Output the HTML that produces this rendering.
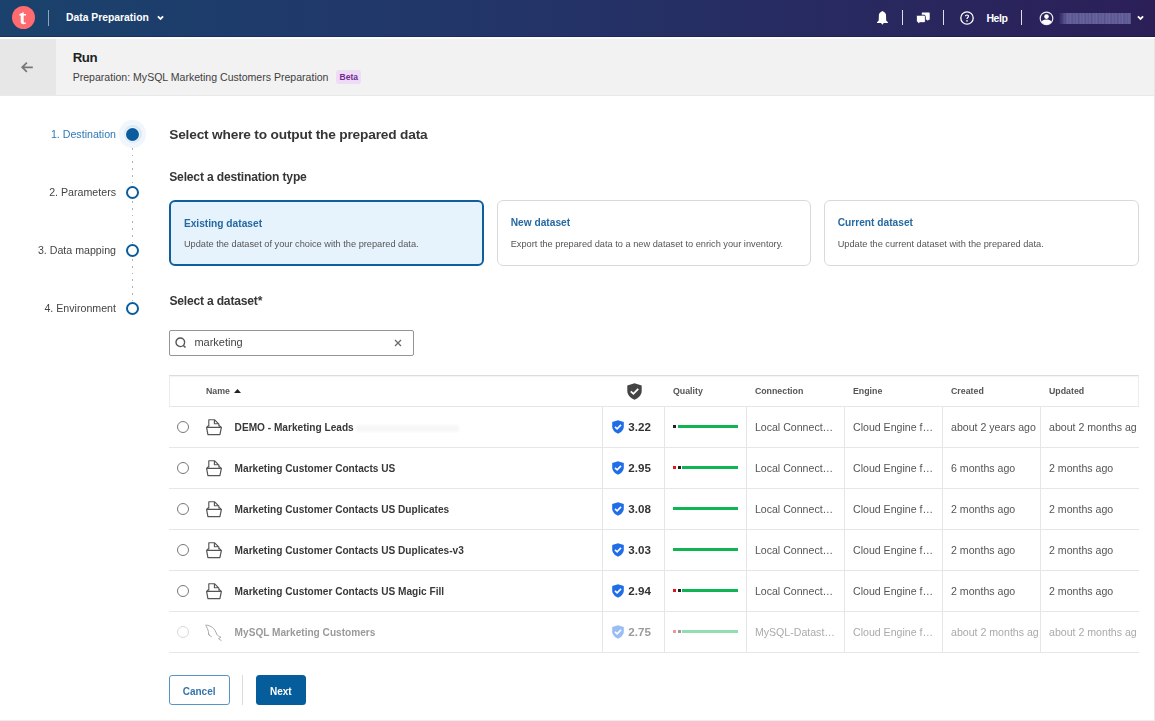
<!DOCTYPE html><html><head><meta charset="utf-8"><style>
html,body{margin:0;padding:0;}
body{width:1155px;height:721px;overflow:hidden;position:relative;background:#fff;filter:blur(0.3px);font-family:"Liberation Sans",sans-serif;}
.t{position:absolute;white-space:nowrap;}
.b{position:absolute;box-sizing:border-box;}
svg{position:absolute;overflow:visible;}
</style></head><body>
<div class="b" style="left:0px;top:0px;width:1155px;height:37px;background:linear-gradient(90deg,#1a426d 0%,#233468 45%,#2c1f58 100%);"></div>
<div class="b" style="left:0px;top:36px;width:1155px;height:1px;background:rgba(10,10,50,0.25);"></div>
<div class="b" style="left:0px;top:37px;width:1155px;height:2px;background:#fbfbfb;"></div>
<div class="b" style="left:11.8px;top:6.2px;width:23px;height:23px;border-radius:50%;background:#ff6b6e;"></div>
<svg style="left:0;top:0" width="40" height="37" viewBox="0 0 40 37"><path d="M20.7 13.6 L23.7 11.9 L23.7 14 L26 14 L26 15.6 L23.7 15.6 L23.7 21.6 Q23.7 22.7 24.8 22.7 L26 22.5 L26 23.6 Q25 24.2 23.5 24.2 Q20.7 24.2 20.7 21.5 L20.7 15.6 L19.3 15.6 L19.3 14.6 Z" fill="#fff"/></svg>
<div class="b" style="left:47.5px;top:10px;width:1px;height:15.5px;background:#8fa2bb;"></div>
<div class="t " style="left:66px;top:12.54px;font-size:10.35px;line-height:10.35px;color:#fff;font-weight:700;">Data Preparation</div>
<svg style="left:157px;top:15px" width="7" height="6" viewBox="0 0 7 6"><path d="M0.9 1.3 L3.5 3.9 L6.1 1.3" fill="none" stroke="#fff" stroke-width="1.8"/></svg>
<svg style="left:872px;top:8px" width="22" height="20" viewBox="0 0 22 20"><path d="M10.4 3 C8.9 4 7.1 4.6 6.9 6.8 L6.7 12.6 L5 14.2 L5 14.9 L15.9 14.9 L15.9 14.2 L14.2 12.6 L14 6.8 C13.8 4.6 12 4 10.4 3 Z M9 15.1 L10.4 16.8 L11.8 15.1 Z" fill="#fff"/></svg>
<div class="b" style="left:902px;top:10px;width:1px;height:15px;background:#fff;opacity:.85;"></div>
<svg style="left:915.5px;top:11.5px" width="15" height="13" viewBox="0 0 15 13"><path d="M6.4 0.4 H13.1 Q13.7 0.4 13.7 1 V7.2 Q13.7 7.8 13.1 7.8 H12.5 L11.9 9 L11.1 7.8 H6.4 Q5.8 7.8 5.8 7.2 V1 Q5.8 0.4 6.4 0.4 Z" fill="#fff"/><path d="M1.8 3.2 H8 Q9.4 3.2 9.4 4.6 V9.3 Q9.4 10.7 8 10.7 H3.6 L2.4 11.9 L2 10.6 Q0.4 10.3 0.4 8.8 V4.6 Q0.4 3.2 1.8 3.2 Z" fill="#fff" stroke="#27255e" stroke-width="0.9"/></svg>
<div class="b" style="left:942.5px;top:10px;width:1px;height:15px;background:#fff;opacity:.85;"></div>
<svg style="left:959.5px;top:11px" width="14" height="14" viewBox="0 0 14 14"><circle cx="7" cy="7" r="6.2" fill="none" stroke="#fff" stroke-width="1.3"/><path d="M4.9 5.3 C4.9 4.1 5.8 3.4 7 3.4 C8.2 3.4 9.1 4.1 9.1 5.2 C9.1 6.5 7.6 6.7 7.6 8.1 L6.4 8.1 C6.4 6.3 7.9 6.1 7.9 5.2 C7.9 4.7 7.5 4.4 7 4.4 C6.4 4.4 6.1 4.8 6.1 5.3 Z" fill="#fff"/><circle cx="7" cy="9.9" r="0.8" fill="#fff"/></svg>
<div class="t " style="left:986.4px;top:13.11px;font-size:10.5px;line-height:10.5px;color:#fff;font-weight:700;letter-spacing:-0.4px;">Help</div>
<div class="b" style="left:1021px;top:10px;width:1px;height:15px;background:#fff;opacity:.85;"></div>
<svg style="left:1038.5px;top:10.5px" width="15" height="15" viewBox="0 0 15 15"><defs><clipPath id="uc"><circle cx="7.5" cy="7.4" r="6.2"/></clipPath></defs><circle cx="7.5" cy="7.4" r="6.3" fill="none" stroke="#fff" stroke-width="1.2" opacity="0.92"/><g clip-path="url(#uc)"><circle cx="7.5" cy="5.6" r="2.3" fill="#fff"/><ellipse cx="7.5" cy="13.1" rx="6" ry="4.6" fill="#fff"/></g></svg>
<div class="b" style="left:1058.5px;top:12.5px;width:72px;height:11.2px;background:linear-gradient(90deg,#2c2460 0%,rgba(44,36,96,0.5) 5%,rgba(44,36,96,0) 10%),repeating-linear-gradient(90deg,#57538d 0px,#67629a 2px,#5c5892 3.5px,#6a659c 5px,#57538d 6.5px);filter:blur(0.6px);"></div>
<svg style="left:1137px;top:15px" width="7" height="6" viewBox="0 0 7 6"><path d="M0.9 1.3 L3.5 3.9 L6.1 1.3" fill="none" stroke="#fff" stroke-width="1.8"/></svg>
<div class="b" style="left:0px;top:39px;width:1155px;height:57px;background:#f2f2f2;border-bottom:1px solid #e9e9e9;"></div>
<div class="b" style="left:0px;top:39px;width:56px;height:56px;background:#e7e7e7;"></div>
<svg style="left:21px;top:62.3px" width="12" height="11" viewBox="0 0 12 11"><path d="M11.8 5.3 H1.3 M5.9 0.7 L1.2 5.3 L5.9 9.9" fill="none" stroke="#777" stroke-width="1.7"/></svg>
<div class="t " style="left:72.7px;top:50.94px;font-size:13.3px;line-height:13.3px;color:#1f1f1f;font-weight:700;letter-spacing:-0.427px;">Run</div>
<div class="t " style="left:72.7px;top:71.67px;font-size:10.55px;line-height:10.55px;color:#404040;font-weight:400;">Preparation: MySQL Marketing Customers Preparation</div>
<div class="b" style="left:336px;top:70.4px;width:25px;height:13.5px;background:#eedcf6;border-radius:3px;"></div>
<div class="t " style="left:339.6px;top:73.10px;font-size:8.5px;line-height:8.5px;color:#6f2c91;font-weight:700;">Beta</div>
<div class="b" style="left:1154px;top:38px;width:1px;height:683px;background:#e6e6e6;"></div>
<div class="b" style="left:0px;top:720px;width:1155px;height:1px;background:#ececec;"></div>
<div class="t " style="right:1039px;top:128.53px;font-size:10.65px;line-height:10.65px;color:#2d79b3;font-weight:400;text-align:right;">1. Destination</div>
<div class="b" style="left:118.75px;top:120.4px;width:27.5px;height:27.5px;border-radius:50%;background:#f0f6fb;"></div>
<div class="b" style="left:123.5px;top:125.15px;width:18px;height:18px;border-radius:50%;background:#d8e9f6;"></div>
<div class="b" style="left:124.9px;top:126.55000000000001px;width:15.2px;height:15.2px;border-radius:50%;background:#eef5fb;"></div>
<div class="b" style="left:125.95px;top:127.60000000000001px;width:13.1px;height:13.1px;border-radius:50%;background:#0b5c9c;"></div>
<div class="t " style="right:1039px;top:186.78px;font-size:10.65px;line-height:10.65px;color:#444;font-weight:400;text-align:right;">2. Parameters</div>
<div class="b" style="left:126.0px;top:185.5px;width:13px;height:13px;border-radius:50%;border:2px solid #0b5c9c;background:#fff;"></div>
<div class="t " style="right:1039px;top:244.78px;font-size:10.65px;line-height:10.65px;color:#444;font-weight:400;text-align:right;">3. Data mapping</div>
<div class="b" style="left:126.0px;top:243.5px;width:13px;height:13px;border-radius:50%;border:2px solid #0b5c9c;background:#fff;"></div>
<div class="t " style="right:1039px;top:302.78px;font-size:10.65px;line-height:10.65px;color:#444;font-weight:400;text-align:right;">4. Environment</div>
<div class="b" style="left:126.0px;top:301.5px;width:13px;height:13px;border-radius:50%;border:2px solid #0b5c9c;background:#fff;"></div>
<div class="b" style="left:132px;top:147.85px;width:1.2px;height:1.8px;background:#b0b0b0;"></div>
<div class="b" style="left:132px;top:154.6px;width:1.2px;height:1.8px;background:#b0b0b0;"></div>
<div class="b" style="left:132px;top:161.35px;width:1.2px;height:1.8px;background:#b0b0b0;"></div>
<div class="b" style="left:132px;top:168.1px;width:1.2px;height:1.8px;background:#b0b0b0;"></div>
<div class="b" style="left:132px;top:174.85px;width:1.2px;height:1.8px;background:#b0b0b0;"></div>
<div class="b" style="left:132px;top:181.6px;width:1.2px;height:1.8px;background:#b0b0b0;"></div>
<div class="b" style="left:132px;top:201.0px;width:1.2px;height:1.8px;background:#b0b0b0;"></div>
<div class="b" style="left:132px;top:207.75px;width:1.2px;height:1.8px;background:#b0b0b0;"></div>
<div class="b" style="left:132px;top:214.5px;width:1.2px;height:1.8px;background:#b0b0b0;"></div>
<div class="b" style="left:132px;top:221.25px;width:1.2px;height:1.8px;background:#b0b0b0;"></div>
<div class="b" style="left:132px;top:228.0px;width:1.2px;height:1.8px;background:#b0b0b0;"></div>
<div class="b" style="left:132px;top:234.75px;width:1.2px;height:1.8px;background:#b0b0b0;"></div>
<div class="b" style="left:132px;top:241.5px;width:1.2px;height:1.8px;background:#b0b0b0;"></div>
<div class="b" style="left:132px;top:259.0px;width:1.2px;height:1.8px;background:#b0b0b0;"></div>
<div class="b" style="left:132px;top:265.75px;width:1.2px;height:1.8px;background:#b0b0b0;"></div>
<div class="b" style="left:132px;top:272.5px;width:1.2px;height:1.8px;background:#b0b0b0;"></div>
<div class="b" style="left:132px;top:279.25px;width:1.2px;height:1.8px;background:#b0b0b0;"></div>
<div class="b" style="left:132px;top:286.0px;width:1.2px;height:1.8px;background:#b0b0b0;"></div>
<div class="b" style="left:132px;top:292.75px;width:1.2px;height:1.8px;background:#b0b0b0;"></div>
<div class="b" style="left:132px;top:299.5px;width:1.2px;height:1.8px;background:#b0b0b0;"></div>
<div class="t " style="left:169.2px;top:128.20px;font-size:13.7px;line-height:13.7px;color:#363636;font-weight:700;letter-spacing:-0.179px;">Select where to output the prepared data</div>
<div class="t " style="left:169.2px;top:171.36px;font-size:12.1px;line-height:12.1px;color:#363636;font-weight:700;letter-spacing:-0.174px;">Select a destination type</div>
<div class="b" style="left:169px;top:200.3px;width:315px;height:65.7px;border:2px solid #0f5f9e;border-radius:6px;background:#e6f3fc;"></div>
<div class="t " style="left:183.9px;top:218.87px;font-size:10.2px;line-height:10.2px;color:#2569a3;font-weight:700;">Existing dataset</div>
<div class="t " style="left:183.9px;top:239.80px;font-size:9.22px;line-height:9.22px;color:#555;font-weight:400;">Update the dataset of your choice with the prepared data.</div>
<div class="b" style="left:497px;top:200.4px;width:314px;height:65.6px;border:1px solid #d9d9d9;border-radius:6px;background:#fff;"></div>
<div class="t " style="left:510.7px;top:218.27px;font-size:10.2px;line-height:10.2px;color:#2569a3;font-weight:700;">New dataset</div>
<div class="t " style="left:510.7px;top:239.50px;font-size:9.22px;line-height:9.22px;color:#555;font-weight:400;">Export the prepared data to a new dataset to enrich your inventory.</div>
<div class="b" style="left:824px;top:200.4px;width:315px;height:65.6px;border:1px solid #d9d9d9;border-radius:6px;background:#fff;"></div>
<div class="t " style="left:837.7px;top:218.27px;font-size:10.2px;line-height:10.2px;color:#2569a3;font-weight:700;">Current dataset</div>
<div class="t " style="left:837.7px;top:239.50px;font-size:9.22px;line-height:9.22px;color:#555;font-weight:400;">Update the current dataset with the prepared data.</div>
<div class="t " style="left:169.4px;top:295.06px;font-size:12.1px;line-height:12.1px;color:#363636;font-weight:700;letter-spacing:-0.199px;">Select a dataset*</div>
<div class="b" style="left:169px;top:330px;width:245px;height:25.5px;border:1px solid #959595;border-radius:2px;background:#fff;"></div>
<svg style="left:175px;top:337px" width="12" height="12" viewBox="0 0 12 12"><circle cx="5.3" cy="5.3" r="4.3" fill="none" stroke="#555" stroke-width="1.4"/><path d="M8.4 8.4 L10.5 10.5" stroke="#555" stroke-width="1.4"/></svg>
<div class="t " style="left:194.4px;top:337.39px;font-size:11px;line-height:11px;color:#444;font-weight:400;">marketing</div>
<svg style="left:393.5px;top:338.5px" width="8" height="8" viewBox="0 0 8 8"><path d="M1 1 L7 7 M7 1 L1 7" stroke="#666" stroke-width="1.2"/></svg>
<div class="b" style="left:169px;top:374.7px;width:970px;height:32.2px;border:1px solid #ececec;border-top:1px solid #dcdcdc;border-bottom:1px solid #e6e6e6;box-shadow:inset 0 1px 1px #f4f4f4;background:#fff;"></div>
<div class="t " style="left:206px;top:386.65px;font-size:8.8px;line-height:8.8px;color:#555;font-weight:700;">Name</div>
<svg style="left:234px;top:389px" width="7" height="4" viewBox="0 0 7 4"><path d="M0 4 L3.5 0 L7 4 Z" fill="#222"/></svg>
<svg style="left:627px;top:383px" width="15" height="17" viewBox="0 0 15 17"><path d="M7.5 0.3 L14.7 2.6 L14.7 8 C14.7 12 11.6 15 7.5 16.7 C3.4 15 0.3 12 0.3 8 L0.3 2.6 Z" fill="#444"/><path d="M3.8 8.3 L6.4 10.8 L11.2 5.8" fill="none" stroke="#fff" stroke-width="1.8"/></svg>
<div class="t " style="left:673px;top:386.55px;font-size:8.8px;line-height:8.8px;color:#555;font-weight:700;">Quality</div>
<div class="t " style="left:754.9px;top:386.55px;font-size:8.8px;line-height:8.8px;color:#555;font-weight:700;">Connection</div>
<div class="t " style="left:853px;top:386.55px;font-size:8.8px;line-height:8.8px;color:#555;font-weight:700;">Engine</div>
<div class="t " style="left:951px;top:386.55px;font-size:8.8px;line-height:8.8px;color:#555;font-weight:700;">Created</div>
<div class="t " style="left:1049px;top:386.55px;font-size:8.8px;line-height:8.8px;color:#555;font-weight:700;">Updated</div>
<div class="b" style="left:169px;top:446.6px;width:970px;height:1px;background:#e6e6e6;"></div>
<div class="b" style="left:602.3px;top:406px;width:1px;height:41px;background:#e6e6e6;"></div>
<div class="b" style="left:664px;top:406px;width:1px;height:41px;background:#e6e6e6;"></div>
<div class="b" style="left:746px;top:406px;width:1px;height:41px;background:#e6e6e6;"></div>
<div class="b" style="left:844px;top:406px;width:1px;height:41px;background:#e6e6e6;"></div>
<div class="b" style="left:942px;top:406px;width:1px;height:41px;background:#e6e6e6;"></div>
<div class="b" style="left:1040px;top:406px;width:1px;height:41px;background:#e6e6e6;"></div>
<div class="b" style="left:176.8px;top:420.5px;width:12px;height:12px;border-radius:50%;border:1px solid #777;background:#fff;"></div>
<svg style="left:206px;top:419.2px" width="16" height="17" viewBox="0 0 16 17"><path d="M2.8 7.6 V0.7 H8.4 L12.9 5.1 V7.6 M8.4 0.7 V4.7 H12.9" fill="none" stroke="#555" stroke-width="1.15" stroke-linejoin="round"/><path d="M2.7 6.4 L0.6 8.4 H15.4 L13.1 6.4 M0.6 8.4 L1.9 15.6 H13.9 L15.4 8.4" fill="none" stroke="#555" stroke-width="1.2" stroke-linejoin="round"/></svg>
<div class="t " style="left:234.6px;top:422.83px;font-size:10.12px;line-height:10.12px;color:#383838;font-weight:700;">DEMO - Marketing Leads</div>
<div class="b" style="left:356px;top:424.5px;width:103px;height:7.5px;background:#f7f7f7;filter:blur(1px);border-radius:2px;"></div>
<svg style="left:612px;top:420.0px;" width="12" height="14" viewBox="0 0 12 14"><path d="M6 0.2 L11.8 2.1 L11.8 6.6 C11.8 9.9 9.3 12.4 6 13.8 C2.7 12.4 0.2 9.9 0.2 6.6 L0.2 2.1 Z" fill="#1f6ee8"/><path d="M3 6.9 L5.1 8.9 L9 4.9" fill="none" stroke="#fff" stroke-width="1.6"/></svg>
<div class="t " style="left:628.3px;top:421.48px;font-size:11.6px;line-height:11.6px;color:#333;font-weight:700;">3.22</div>
<div class="b" style="left:673px;top:425.0px;width:3px;height:3px;background:#222;"></div>
<div class="b" style="left:677.5px;top:425.0px;width:60.10000000000002px;height:3.4px;background:#0fb552;border-radius:0;"></div>
<div class="t " style="left:754.9px;top:422.33px;font-size:10.6px;line-height:10.6px;color:#555;font-weight:400;">Local Connect…</div>
<div class="t " style="left:853px;top:422.33px;font-size:10.6px;line-height:10.6px;color:#555;font-weight:400;">Cloud Engine f…</div>
<div class="t " style="left:951px;top:422.33px;font-size:10.6px;line-height:10.6px;color:#555;font-weight:400;width:90px;overflow:hidden;">about 2 years ago</div>
<div class="t " style="left:1049px;top:422.33px;font-size:10.6px;line-height:10.6px;color:#555;font-weight:400;width:90px;overflow:hidden;">about 2 months ag</div>
<div class="b" style="left:169px;top:487.6px;width:970px;height:1px;background:#e6e6e6;"></div>
<div class="b" style="left:602.3px;top:447px;width:1px;height:41px;background:#e6e6e6;"></div>
<div class="b" style="left:664px;top:447px;width:1px;height:41px;background:#e6e6e6;"></div>
<div class="b" style="left:746px;top:447px;width:1px;height:41px;background:#e6e6e6;"></div>
<div class="b" style="left:844px;top:447px;width:1px;height:41px;background:#e6e6e6;"></div>
<div class="b" style="left:942px;top:447px;width:1px;height:41px;background:#e6e6e6;"></div>
<div class="b" style="left:1040px;top:447px;width:1px;height:41px;background:#e6e6e6;"></div>
<div class="b" style="left:176.8px;top:461.5px;width:12px;height:12px;border-radius:50%;border:1px solid #777;background:#fff;"></div>
<svg style="left:206px;top:460.2px" width="16" height="17" viewBox="0 0 16 17"><path d="M2.8 7.6 V0.7 H8.4 L12.9 5.1 V7.6 M8.4 0.7 V4.7 H12.9" fill="none" stroke="#555" stroke-width="1.15" stroke-linejoin="round"/><path d="M2.7 6.4 L0.6 8.4 H15.4 L13.1 6.4 M0.6 8.4 L1.9 15.6 H13.9 L15.4 8.4" fill="none" stroke="#555" stroke-width="1.2" stroke-linejoin="round"/></svg>
<div class="t " style="left:234.6px;top:463.83px;font-size:10.12px;line-height:10.12px;color:#383838;font-weight:700;">Marketing Customer Contacts US</div>
<svg style="left:612px;top:461.0px;" width="12" height="14" viewBox="0 0 12 14"><path d="M6 0.2 L11.8 2.1 L11.8 6.6 C11.8 9.9 9.3 12.4 6 13.8 C2.7 12.4 0.2 9.9 0.2 6.6 L0.2 2.1 Z" fill="#1f6ee8"/><path d="M3 6.9 L5.1 8.9 L9 4.9" fill="none" stroke="#fff" stroke-width="1.6"/></svg>
<div class="t " style="left:628.3px;top:462.48px;font-size:11.6px;line-height:11.6px;color:#333;font-weight:700;">2.95</div>
<div class="b" style="left:673px;top:466.0px;width:3px;height:3px;background:#e0161b;"></div>
<div class="b" style="left:677.5px;top:466.0px;width:3px;height:3px;background:#222;"></div>
<div class="b" style="left:682.0px;top:466.0px;width:55.60000000000002px;height:3.4px;background:#0fb552;border-radius:0;"></div>
<div class="t " style="left:754.9px;top:463.33px;font-size:10.6px;line-height:10.6px;color:#555;font-weight:400;">Local Connect…</div>
<div class="t " style="left:853px;top:463.33px;font-size:10.6px;line-height:10.6px;color:#555;font-weight:400;">Cloud Engine f…</div>
<div class="t " style="left:951px;top:463.33px;font-size:10.6px;line-height:10.6px;color:#555;font-weight:400;width:90px;overflow:hidden;">6 months ago</div>
<div class="t " style="left:1049px;top:463.33px;font-size:10.6px;line-height:10.6px;color:#555;font-weight:400;width:90px;overflow:hidden;">2 months ago</div>
<div class="b" style="left:169px;top:528.6px;width:970px;height:1px;background:#e6e6e6;"></div>
<div class="b" style="left:602.3px;top:488px;width:1px;height:41px;background:#e6e6e6;"></div>
<div class="b" style="left:664px;top:488px;width:1px;height:41px;background:#e6e6e6;"></div>
<div class="b" style="left:746px;top:488px;width:1px;height:41px;background:#e6e6e6;"></div>
<div class="b" style="left:844px;top:488px;width:1px;height:41px;background:#e6e6e6;"></div>
<div class="b" style="left:942px;top:488px;width:1px;height:41px;background:#e6e6e6;"></div>
<div class="b" style="left:1040px;top:488px;width:1px;height:41px;background:#e6e6e6;"></div>
<div class="b" style="left:176.8px;top:502.5px;width:12px;height:12px;border-radius:50%;border:1px solid #777;background:#fff;"></div>
<svg style="left:206px;top:501.2px" width="16" height="17" viewBox="0 0 16 17"><path d="M2.8 7.6 V0.7 H8.4 L12.9 5.1 V7.6 M8.4 0.7 V4.7 H12.9" fill="none" stroke="#555" stroke-width="1.15" stroke-linejoin="round"/><path d="M2.7 6.4 L0.6 8.4 H15.4 L13.1 6.4 M0.6 8.4 L1.9 15.6 H13.9 L15.4 8.4" fill="none" stroke="#555" stroke-width="1.2" stroke-linejoin="round"/></svg>
<div class="t " style="left:234.6px;top:504.83px;font-size:10.12px;line-height:10.12px;color:#383838;font-weight:700;">Marketing Customer Contacts US Duplicates</div>
<svg style="left:612px;top:502.0px;" width="12" height="14" viewBox="0 0 12 14"><path d="M6 0.2 L11.8 2.1 L11.8 6.6 C11.8 9.9 9.3 12.4 6 13.8 C2.7 12.4 0.2 9.9 0.2 6.6 L0.2 2.1 Z" fill="#1f6ee8"/><path d="M3 6.9 L5.1 8.9 L9 4.9" fill="none" stroke="#fff" stroke-width="1.6"/></svg>
<div class="t " style="left:628.3px;top:503.48px;font-size:11.6px;line-height:11.6px;color:#333;font-weight:700;">3.08</div>
<div class="b" style="left:673px;top:507.0px;width:64.60000000000002px;height:3.4px;background:#0fb552;border-radius:0;"></div>
<div class="t " style="left:754.9px;top:504.33px;font-size:10.6px;line-height:10.6px;color:#555;font-weight:400;">Local Connect…</div>
<div class="t " style="left:853px;top:504.33px;font-size:10.6px;line-height:10.6px;color:#555;font-weight:400;">Cloud Engine f…</div>
<div class="t " style="left:951px;top:504.33px;font-size:10.6px;line-height:10.6px;color:#555;font-weight:400;width:90px;overflow:hidden;">2 months ago</div>
<div class="t " style="left:1049px;top:504.33px;font-size:10.6px;line-height:10.6px;color:#555;font-weight:400;width:90px;overflow:hidden;">2 months ago</div>
<div class="b" style="left:169px;top:569.6px;width:970px;height:1px;background:#e6e6e6;"></div>
<div class="b" style="left:602.3px;top:529px;width:1px;height:41px;background:#e6e6e6;"></div>
<div class="b" style="left:664px;top:529px;width:1px;height:41px;background:#e6e6e6;"></div>
<div class="b" style="left:746px;top:529px;width:1px;height:41px;background:#e6e6e6;"></div>
<div class="b" style="left:844px;top:529px;width:1px;height:41px;background:#e6e6e6;"></div>
<div class="b" style="left:942px;top:529px;width:1px;height:41px;background:#e6e6e6;"></div>
<div class="b" style="left:1040px;top:529px;width:1px;height:41px;background:#e6e6e6;"></div>
<div class="b" style="left:176.8px;top:543.5px;width:12px;height:12px;border-radius:50%;border:1px solid #777;background:#fff;"></div>
<svg style="left:206px;top:542.2px" width="16" height="17" viewBox="0 0 16 17"><path d="M2.8 7.6 V0.7 H8.4 L12.9 5.1 V7.6 M8.4 0.7 V4.7 H12.9" fill="none" stroke="#555" stroke-width="1.15" stroke-linejoin="round"/><path d="M2.7 6.4 L0.6 8.4 H15.4 L13.1 6.4 M0.6 8.4 L1.9 15.6 H13.9 L15.4 8.4" fill="none" stroke="#555" stroke-width="1.2" stroke-linejoin="round"/></svg>
<div class="t " style="left:234.6px;top:545.83px;font-size:10.12px;line-height:10.12px;color:#383838;font-weight:700;">Marketing Customer Contacts US Duplicates-v3</div>
<svg style="left:612px;top:543.0px;" width="12" height="14" viewBox="0 0 12 14"><path d="M6 0.2 L11.8 2.1 L11.8 6.6 C11.8 9.9 9.3 12.4 6 13.8 C2.7 12.4 0.2 9.9 0.2 6.6 L0.2 2.1 Z" fill="#1f6ee8"/><path d="M3 6.9 L5.1 8.9 L9 4.9" fill="none" stroke="#fff" stroke-width="1.6"/></svg>
<div class="t " style="left:628.3px;top:544.48px;font-size:11.6px;line-height:11.6px;color:#333;font-weight:700;">3.03</div>
<div class="b" style="left:673px;top:548.0px;width:64.60000000000002px;height:3.4px;background:#0fb552;border-radius:0;"></div>
<div class="t " style="left:754.9px;top:545.33px;font-size:10.6px;line-height:10.6px;color:#555;font-weight:400;">Local Connect…</div>
<div class="t " style="left:853px;top:545.33px;font-size:10.6px;line-height:10.6px;color:#555;font-weight:400;">Cloud Engine f…</div>
<div class="t " style="left:951px;top:545.33px;font-size:10.6px;line-height:10.6px;color:#555;font-weight:400;width:90px;overflow:hidden;">2 months ago</div>
<div class="t " style="left:1049px;top:545.33px;font-size:10.6px;line-height:10.6px;color:#555;font-weight:400;width:90px;overflow:hidden;">2 months ago</div>
<div class="b" style="left:169px;top:610.6px;width:970px;height:1px;background:#e6e6e6;"></div>
<div class="b" style="left:602.3px;top:570px;width:1px;height:41px;background:#e6e6e6;"></div>
<div class="b" style="left:664px;top:570px;width:1px;height:41px;background:#e6e6e6;"></div>
<div class="b" style="left:746px;top:570px;width:1px;height:41px;background:#e6e6e6;"></div>
<div class="b" style="left:844px;top:570px;width:1px;height:41px;background:#e6e6e6;"></div>
<div class="b" style="left:942px;top:570px;width:1px;height:41px;background:#e6e6e6;"></div>
<div class="b" style="left:1040px;top:570px;width:1px;height:41px;background:#e6e6e6;"></div>
<div class="b" style="left:176.8px;top:584.5px;width:12px;height:12px;border-radius:50%;border:1px solid #777;background:#fff;"></div>
<svg style="left:206px;top:583.2px" width="16" height="17" viewBox="0 0 16 17"><path d="M2.8 7.6 V0.7 H8.4 L12.9 5.1 V7.6 M8.4 0.7 V4.7 H12.9" fill="none" stroke="#555" stroke-width="1.15" stroke-linejoin="round"/><path d="M2.7 6.4 L0.6 8.4 H15.4 L13.1 6.4 M0.6 8.4 L1.9 15.6 H13.9 L15.4 8.4" fill="none" stroke="#555" stroke-width="1.2" stroke-linejoin="round"/></svg>
<div class="t " style="left:234.6px;top:586.83px;font-size:10.12px;line-height:10.12px;color:#383838;font-weight:700;">Marketing Customer Contacts US Magic Fill</div>
<svg style="left:612px;top:584.0px;" width="12" height="14" viewBox="0 0 12 14"><path d="M6 0.2 L11.8 2.1 L11.8 6.6 C11.8 9.9 9.3 12.4 6 13.8 C2.7 12.4 0.2 9.9 0.2 6.6 L0.2 2.1 Z" fill="#1f6ee8"/><path d="M3 6.9 L5.1 8.9 L9 4.9" fill="none" stroke="#fff" stroke-width="1.6"/></svg>
<div class="t " style="left:628.3px;top:585.48px;font-size:11.6px;line-height:11.6px;color:#333;font-weight:700;">2.94</div>
<div class="b" style="left:673px;top:589.0px;width:3px;height:3px;background:#e0161b;"></div>
<div class="b" style="left:677.5px;top:589.0px;width:3px;height:3px;background:#222;"></div>
<div class="b" style="left:682.0px;top:589.0px;width:55.60000000000002px;height:3.4px;background:#0fb552;border-radius:0;"></div>
<div class="t " style="left:754.9px;top:586.33px;font-size:10.6px;line-height:10.6px;color:#555;font-weight:400;">Local Connect…</div>
<div class="t " style="left:853px;top:586.33px;font-size:10.6px;line-height:10.6px;color:#555;font-weight:400;">Cloud Engine f…</div>
<div class="t " style="left:951px;top:586.33px;font-size:10.6px;line-height:10.6px;color:#555;font-weight:400;width:90px;overflow:hidden;">2 months ago</div>
<div class="t " style="left:1049px;top:586.33px;font-size:10.6px;line-height:10.6px;color:#555;font-weight:400;width:90px;overflow:hidden;">2 months ago</div>
<div class="b" style="left:169px;top:651.6px;width:970px;height:1px;background:#e6e6e6;"></div>
<div class="b" style="left:602.3px;top:611px;width:1px;height:41px;background:#e6e6e6;"></div>
<div class="b" style="left:664px;top:611px;width:1px;height:41px;background:#e6e6e6;"></div>
<div class="b" style="left:746px;top:611px;width:1px;height:41px;background:#e6e6e6;"></div>
<div class="b" style="left:844px;top:611px;width:1px;height:41px;background:#e6e6e6;"></div>
<div class="b" style="left:942px;top:611px;width:1px;height:41px;background:#e6e6e6;"></div>
<div class="b" style="left:1040px;top:611px;width:1px;height:41px;background:#e6e6e6;"></div>
<div class="b" style="left:176.8px;top:625.5px;width:12px;height:12px;border-radius:50%;border:1px solid #d8d8d8;background:#fff;"></div>
<svg style="left:205px;top:623.5px" width="18" height="18" viewBox="0 0 18 18"><path d="M0.5 1.1 C2.5 0.9 5.5 2 7.6 3.6 C9.5 5 10.8 7.5 11.6 10 C12.3 11.6 14.3 12.3 15.9 13.2 L13.5 14.6 L16.5 16.8 M0.8 1.6 C2 3.5 3 5.5 3.4 7.5 L3.6 10.8 C4.5 11.5 5.8 12.2 6.8 12.9 M3.6 9.5 L4.4 10.8" fill="none" stroke="#a8a8a8" stroke-width="1" stroke-linejoin="round"/></svg>
<div class="t " style="left:234.6px;top:627.83px;font-size:10.12px;line-height:10.12px;color:#9a9a9a;font-weight:700;">MySQL Marketing Customers</div>
<svg style="left:612px;top:625.0px;opacity:.45;" width="12" height="14" viewBox="0 0 12 14"><path d="M6 0.2 L11.8 2.1 L11.8 6.6 C11.8 9.9 9.3 12.4 6 13.8 C2.7 12.4 0.2 9.9 0.2 6.6 L0.2 2.1 Z" fill="#1f6ee8"/><path d="M3 6.9 L5.1 8.9 L9 4.9" fill="none" stroke="#fff" stroke-width="1.6"/></svg>
<div class="t " style="left:628.3px;top:626.48px;font-size:11.6px;line-height:11.6px;color:#9a9a9a;font-weight:700;">2.75</div>
<div class="b" style="left:673px;top:630.0px;width:3px;height:3px;background:#e0161b;opacity:.45;"></div>
<div class="b" style="left:677.5px;top:630.0px;width:3px;height:3px;background:#222;opacity:.45;"></div>
<div class="b" style="left:682.0px;top:630.0px;width:55.60000000000002px;height:3.4px;background:#0fb552;border-radius:0;opacity:.45;"></div>
<div class="t " style="left:754.9px;top:627.33px;font-size:10.6px;line-height:10.6px;color:#aaa;font-weight:400;">MySQL-Datast…</div>
<div class="t " style="left:853px;top:627.33px;font-size:10.6px;line-height:10.6px;color:#aaa;font-weight:400;">Cloud Engine f…</div>
<div class="t " style="left:951px;top:627.33px;font-size:10.6px;line-height:10.6px;color:#aaa;font-weight:400;width:90px;overflow:hidden;">about 2 months ag</div>
<div class="t " style="left:1049px;top:627.33px;font-size:10.6px;line-height:10.6px;color:#aaa;font-weight:400;width:90px;overflow:hidden;">about 2 months ag</div>
<div class="b" style="left:169px;top:675px;width:60.5px;height:30px;border:1px solid #5a94c6;border-radius:3px;background:#fff;"></div>
<div class="t " style="left:182.7px;top:686.54px;font-size:10.0px;line-height:10.0px;color:#3574ad;font-weight:700;">Cancel</div>
<div class="b" style="left:242px;top:675px;width:1px;height:30px;background:#dcdcdc;"></div>
<div class="b" style="left:256px;top:675px;width:49.5px;height:30px;border-radius:3.5px;background:#065d9b;"></div>
<div class="t " style="left:270px;top:686.74px;font-size:10.0px;line-height:10.0px;color:#fff;font-weight:700;">Next</div>
</body></html>
